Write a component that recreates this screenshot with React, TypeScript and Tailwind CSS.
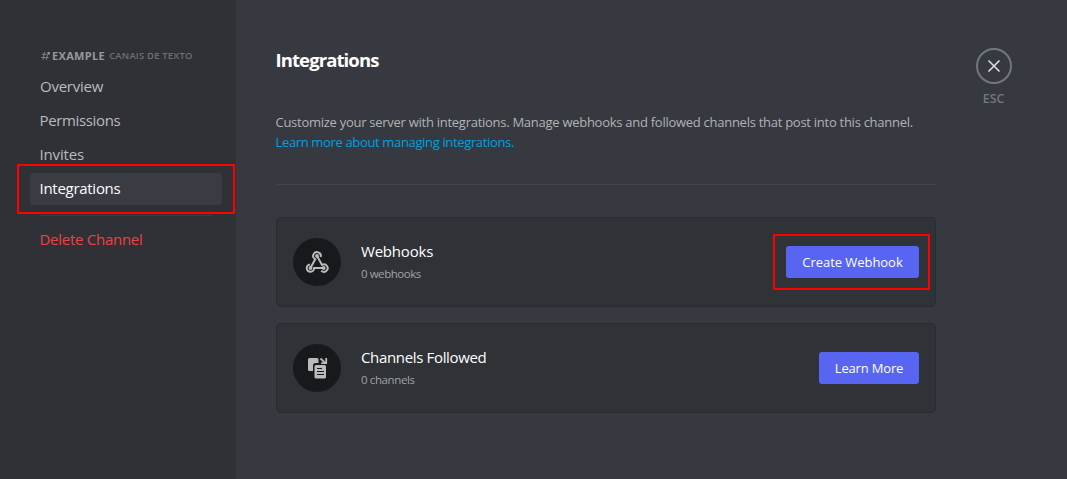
import React from 'react';

function NavItem({ label, tone, className }: { label: string; tone: string; className: string }) {
  return (
    <div className={`flex h-8 items-center whitespace-nowrap rounded px-2.5 pb-0.5 text-[15px] ${tone}`}>
      <span className={className}>{label}</span>
    </div>
  );
}

function Sidebar() {
  return (
    <aside className="w-[236px] shrink-0 bg-[#2f3136] pl-[30px] pr-3.5">
      <div className="flex h-[71px] flex-col justify-end pl-2.5">
        <div className="mb-1.5 flex h-[18px] items-center whitespace-nowrap">
          <svg width="12" height="10" viewBox="0 0 12 10" fill="none" stroke="#7d7f85" strokeWidth="1">
            <path d="M4.500 1 3 8.800M7.500 3.500 6.500 8.800M2 3.300H6.500M1.200 6.500H8.500" />
            <rect x="7.500" y="1" width="2.300" height="2.500" fill="#96989d" stroke="none" />
          </svg>
          <span className="text-[11px] font-bold tracking-[0.34px] text-[#96989d]">EXAMPLE</span>
          <span className="ml-[4px] text-[9.5px] font-semibold tracking-[0.18px] text-[#6d7077]">CANAIS DE TEXTO</span>
        </div>
      </div>
      <nav className="flex flex-col gap-0.5">
        <NavItem label="Overview" tone="text-[#b9bbbe]" className="tracking-[-0.25px]" />
        <NavItem label="Permissions" tone="text-[#b9bbbe]" className="-ml-[0.5px] tracking-[-0.35px]" />
        <NavItem label="Invites" tone="text-[#b9bbbe]" className="-ml-[0.5px] tracking-[-0.15px]" />
        <NavItem label="Integrations" tone="bg-[#393c43] text-white" className="-ml-[0.5px] tracking-[-0.28px]" />
      </nav>
      <div className="mx-2.5 mb-2 mt-[10px] h-px bg-[#3c3e44]" />
      <NavItem label="Delete Channel" tone="text-[#ed4245]" className="-ml-[0.5px] tracking-[-0.27px]" />
    </aside>
  );
}

function WebhookIcon() {
  return (
    <svg width="24" height="24" viewBox="0 0 24 24" fill="none" stroke="#b9bbbe" strokeWidth="2">
      <path d="M15.600 7A3.800 3.800 0 1 0 10.200 9.300L5.800 17.200" />
      <path d="M12.200 6.200 17 14.900A3.700 3.700 0 1 1 16.200 20.600" />
      <path d="M18.500 18H9.100A3.700 3.700 0 1 1 4.900 14.400" />
      <g fill="#b9bbbe" stroke="none">
        <circle cx="12" cy="6" r="1.9" />
        <circle cx="5.500" cy="18" r="1.9" />
        <circle cx="18.700" cy="18" r="1.9" />
      </g>
    </svg>
  );
}

function ChannelsIcon() {
  return (
    <svg width="24" height="24" viewBox="0 0 24 24" fill="#b9bbbe">
      <path d="M4.500 2H12A1.500 1.500 0 0 1 13.500 3.500V7H10.500A2.500 2.500 0 0 0 8 9.500V15H4.500A1.500 1.500 0 0 1 3 13.500V3.500A1.500 1.500 0 0 1 4.500 2Z" />
      <path d="M15.500 2.500 20.500 7.200M21.200 2V7.200H16.200" fill="none" stroke="#b9bbbe" strokeWidth="1.8" />
      <path fillRule="evenodd" d="M11 9H19.500A1.500 1.500 0 0 1 21 10.500V21A1.500 1.500 0 0 1 19.500 22.500H11A1.500 1.500 0 0 1 9.500 21V10.500A1.500 1.500 0 0 1 11 9ZM12 12V13H17V12ZM12 15V16H19V15ZM12 18V19H19V18Z" />
    </svg>
  );
}

function Card({ icon, title, sub, titleClass, subClass, children }: {
  icon: React.ReactNode; title: string; sub: string; titleClass: string; subClass: string; children: React.ReactNode;
}) {
  return (
    <section className="flex h-[90px] items-center rounded-[5px] border border-[#292b2f] bg-[#2f3236] px-4">
      <div className="flex size-12 items-center justify-center rounded-full bg-[#18191c]">{icon}</div>
      <div className="ml-5 flex flex-1 flex-col whitespace-nowrap">
        <span className={`text-[15px] leading-5 text-white ${titleClass}`}>{title}</span>
        <span className={`mt-1 text-[11.5px] leading-[18px] text-[#a0a2a6] ${subClass}`}>{sub}</span>
      </div>
      {children}
    </section>
  );
}

export default function App() {
  return (
    <div className="relative flex h-[479px] w-[1067px] overflow-hidden bg-[#36393f] font-['Open_Sans','Noto_Sans',sans-serif]">
      <Sidebar />
      <main className="ml-10 w-[660px] shrink-0 whitespace-nowrap">
        <h1 className="-ml-[0.5px] mt-12 h-6 text-[18.5px] font-bold leading-6 tracking-[-0.9px] text-white">Integrations</h1>
        <p className="-ml-[0.5px] mt-10 text-[13px] leading-5 tracking-[-0.27px] text-[#b1b3b7]">
          Customize your server with integrations. Manage webhooks and followed channels that post into this channel.
        </p>
        <a className="-ml-[0.5px] block text-[13px] leading-5 tracking-[-0.35px] text-[#00a0e0]">Learn more about managing integrations.</a>
        <hr className="mt-8 border-t border-[#42454a]" />
        <div className="mt-8 flex flex-col gap-4">
          <Card icon={<WebhookIcon />} title="Webhooks" sub="0 webhooks" titleClass="tracking-[-0.2px]" subClass="tracking-[-0.45px]">
            <button className="h-8 w-[133px] rounded-[3px] bg-[#5865f2] text-[13px] leading-[18px] tracking-[-0.05px] text-white">Create Webhook</button>
          </Card>
          <Card icon={<ChannelsIcon />} title="Channels Followed" sub="0 channels" titleClass="tracking-[-0.34px]" subClass="tracking-[-0.38px]">
            <button className="h-8 w-[100px] rounded-[3px] bg-[#5865f2] text-[13px] leading-[18px] tracking-[-0.18px] text-white">Learn More</button>
          </Card>
        </div>
      </main>
      <div className="ml-10 mt-12 flex w-9 flex-col items-center">
        <div className="flex size-9 items-center justify-center rounded-full border-2 border-[#72767d]">
          <svg width="18" height="18" viewBox="0 0 18 18" stroke="#dcddde" strokeWidth="1.6">
            <path d="M3.500 3.500 14.500 14.500M14.500 3.500 3.500 14.500" />
          </svg>
        </div>
        <span className="mr-px mt-1.5 text-[12.5px] font-semibold leading-[18px] tracking-[-0.1px] text-[#72767d]">ESC</span>
      </div>
      <div className="pointer-events-none absolute left-[17px] top-[164px] h-[50px] w-[218px] border-2 border-[#ff0000]" />
      <div className="pointer-events-none absolute left-[773px] top-[234px] h-14 w-[157px] border-2 border-[#ff0000]" />
    </div>
  );
}
